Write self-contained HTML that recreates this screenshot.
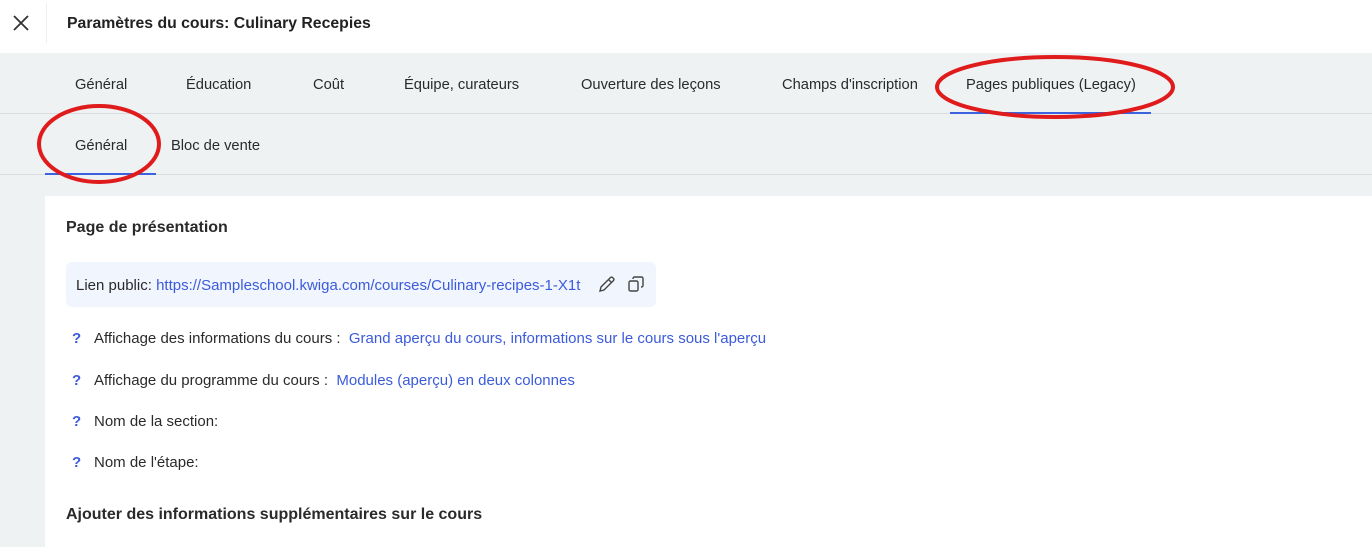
<!DOCTYPE html>
<html><head><meta charset="utf-8"><style>
*{margin:0;padding:0;box-sizing:border-box}
body{width:1372px;height:547px;overflow:hidden;background:#eef2f3;font-family:"Liberation Sans",Arial,sans-serif;color:#1f1f1f;position:relative}
.a{position:absolute;white-space:nowrap}
.t{font-size:15px;color:#2a2a2a}
.n{font-size:14.7px;color:#2a2a2a}
.b{color:#3b5bdb}
</style></head><body>
<div class="a" style="left:0;top:0;width:1372px;height:53px;background:#fff"></div>
<div class="a" style="left:46px;top:3px;width:1px;height:40px;background:#eee"></div>
<svg class="a" style="left:12px;top:14px" width="18" height="18" viewBox="0 0 18 18"><path d="M2 2L16 16M16 2L2 16" stroke="#333" stroke-width="1.8"/></svg>
<div class="a" style="left:67px;top:15px;font-size:15.8px;font-weight:bold;color:#222">Paramètres du cours: Culinary Recepies</div>

<div class="a n" style="left:75px;top:77px">Général</div>
<div class="a n" style="left:186px;top:77px">Éducation</div>
<div class="a n" style="left:313px;top:77px">Coût</div>
<div class="a n" style="left:404px;top:77px">Équipe, curateurs</div>
<div class="a n" style="left:581px;top:77px">Ouverture des leçons</div>
<div class="a n" style="left:782px;top:77px">Champs d'inscription</div>
<div class="a n" style="left:966px;top:77px">Pages publiques (Legacy)</div>
<div class="a" style="left:0;top:113px;width:1372px;height:1px;background:#d8dcdf"></div>
<div class="a" style="left:950px;top:112px;width:201px;height:2px;background:#3b63e0"></div>

<div class="a n" style="left:75px;top:138px">Général</div>
<div class="a n" style="left:171px;top:138px">Bloc de vente</div>
<div class="a" style="left:0;top:174px;width:1372px;height:1px;background:#d8dcdf"></div>
<div class="a" style="left:45px;top:173px;width:111px;height:2px;background:#3b63e0"></div>

<div class="a" style="left:45px;top:196px;width:1327px;height:351px;background:#fff"></div>
<div class="a" style="left:66px;top:219px;font-size:16px;font-weight:bold;color:#2a2a2a">Page de présentation</div>
<div class="a" style="left:66px;top:262px;width:590px;height:45px;background:#f1f5fd;border-radius:6px"></div>
<div class="a t" style="left:76px;top:277px">Lien public: <span class="b">https://Sampleschool.kwiga.com/courses/Culinary-recipes-1-X1t</span></div>
<svg class="a" style="left:597px;top:274px" width="20" height="20" viewBox="0 0 20 20"><path d="M3 17l1-4L13.5 3.5a1.5 1.5 0 0 1 2 0l1 1a1.5 1.5 0 0 1 0 2L7 16z M11.5 5.5l3 3" fill="none" stroke="#444" stroke-width="1.4"/></svg>
<svg class="a" style="left:626px;top:274px" width="20" height="20" viewBox="0 0 20 20"><rect x="3" y="7" width="9" height="10" rx="1.5" fill="none" stroke="#444" stroke-width="1.4"/><path d="M7 5V4.5A1.5 1.5 0 0 1 8.5 3h7A1.5 1.5 0 0 1 17 4.5v7a1.5 1.5 0 0 1-1.5 1.5H15" fill="none" stroke="#444" stroke-width="1.4"/></svg>

<div class="a t" style="left:72px;top:330px"><span class="b" style="font-weight:bold">?</span></div>
<div class="a t" style="left:94px;top:330px">Affichage des informations du cours :&nbsp; <span class="b">Grand aperçu du cours, informations sur le cours sous l'aperçu</span></div>
<div class="a t" style="left:72px;top:372px"><span class="b" style="font-weight:bold">?</span></div>
<div class="a t" style="left:94px;top:372px">Affichage du programme du cours :&nbsp; <span class="b">Modules (aperçu) en deux colonnes</span></div>
<div class="a t" style="left:72px;top:413px"><span class="b" style="font-weight:bold">?</span></div>
<div class="a t" style="left:94px;top:413px">Nom de la section:</div>
<div class="a t" style="left:72px;top:454px"><span class="b" style="font-weight:bold">?</span></div>
<div class="a t" style="left:94px;top:454px">Nom de l'étape:</div>
<div class="a" style="left:66px;top:506px;font-size:16px;font-weight:bold;color:#2a2a2a">Ajouter des informations supplémentaires sur le cours</div>

<svg class="a" style="left:0;top:0" width="1372" height="547">
<ellipse cx="1055" cy="87" rx="118" ry="30" fill="none" stroke="#e01b1b" stroke-width="4"/>
<ellipse cx="99" cy="144" rx="60" ry="38" fill="none" stroke="#e01b1b" stroke-width="4"/>
</svg>
</body></html>
